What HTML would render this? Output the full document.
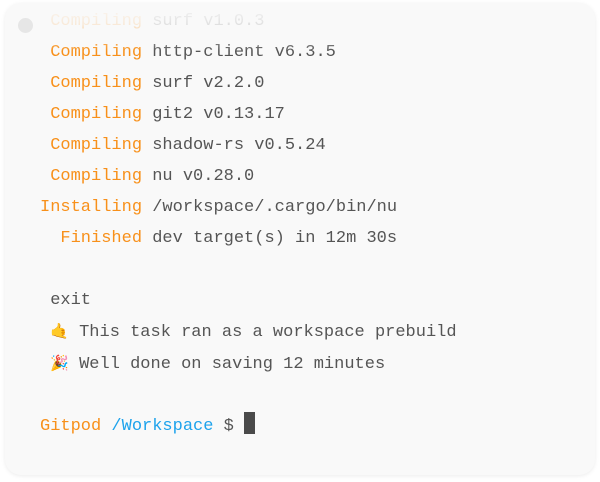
<!DOCTYPE html>
<html><head><meta charset="utf-8"><style>
html,body{margin:0;padding:0;background:#fff;width:600px;height:482px;overflow:hidden}
.card{position:absolute;left:5px;top:3px;width:590px;height:472px;background:#f9f9f9;border-radius:16px;box-shadow:0 1px 4px rgba(0,0,0,0.08);overflow:hidden}
pre{position:absolute;left:35px;top:3px;margin:0;font-family:"Liberation Mono",monospace;font-size:17px;line-height:31px;color:#555}
.o{color:#f8901a}.b{color:#1ea3ec}
.fade{position:absolute;left:0;top:0;width:100%;height:48px;background:linear-gradient(#f9f9f9 0%,rgba(249,249,249,0.85) 45%,rgba(249,249,249,0) 100%)}
.dot{position:absolute;left:13px;top:15px;width:15px;height:15px;border-radius:50%;background:#e6e6e6}
.cur{display:inline-block;width:11px;height:22px;background:#4a4a4a;vertical-align:-4px}
.e{font-family:"Noto Color Emoji","DejaVu Sans",sans-serif;font-size:15px}
</style></head><body>
<div class="card">
<pre><span class="o"> Compiling</span> surf v1.0.3
<span class="o"> Compiling</span> http-client v6.3.5
<span class="o"> Compiling</span> surf v2.2.0
<span class="o"> Compiling</span> git2 v0.13.17
<span class="o"> Compiling</span> shadow-rs v0.5.24
<span class="o"> Compiling</span> nu v0.28.0
<span class="o">Installing</span> /workspace/.cargo/bin/nu
<span class="o">  Finished</span> dev target(s) in 12m 30s

 exit
 <span class="e" style="color:#f2c94c">🤙</span> This task ran as a workspace prebuild
 <span class="e" style="color:#d04a5a">🎉</span> Well done on saving 12 minutes

<span class="o">Gitpod</span> <span class="b">/Workspace</span> $ <span class="cur"></span></pre>
<div class="fade"></div>
<div class="dot"></div>
</div>
</body></html>
